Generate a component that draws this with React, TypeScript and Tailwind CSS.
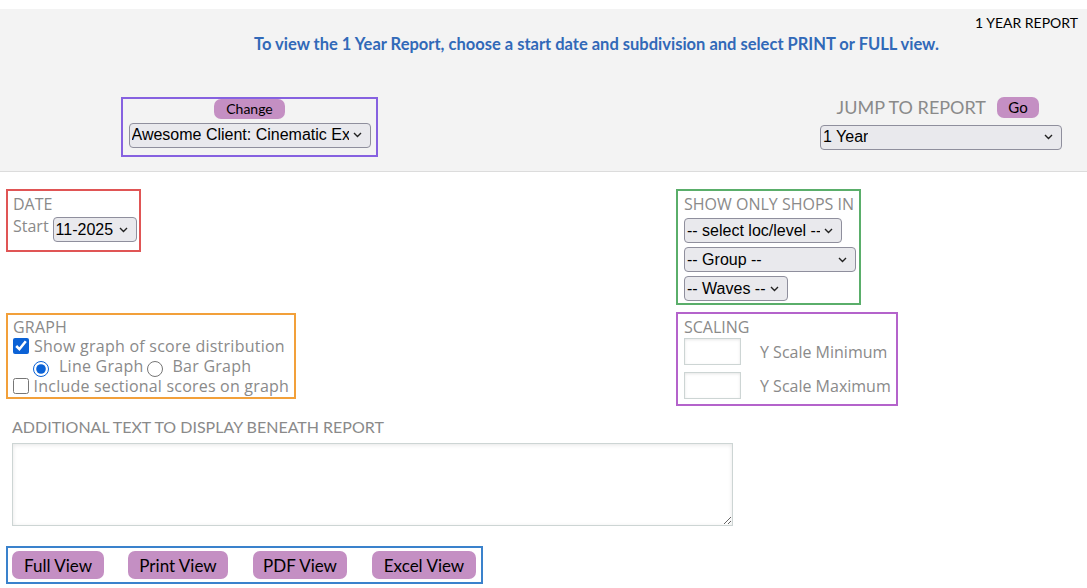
const Chevron = () => (
    <svg width="9" height="6" viewBox="0 0 9 6" className="ml-[4px] shrink-0">
        <path d="M1 1l3.5 3.5L8 1" fill="none" stroke="#222" strokeWidth="1.4"/>
    </svg>
)

const Select = ({label, className}: { label: string, className: string }) => (
    <div
        className={`flex h-[25px] shrink-0 items-center justify-between overflow-hidden rounded-[4px] border border-[#8f8f9d] bg-[#e9e9ed] pl-[2px] pr-[8px] font-['Liberation_Sans',Arial,sans-serif] text-[16px] leading-none text-black ${className}`}>
        <span className="overflow-hidden whitespace-nowrap">{label}</span>
        <Chevron/>
    </div>
)

const PurpleButton = ({children, className}: { children: string, className: string }) => (
    <button
        className={`rounded-[7px] bg-[#c48fc3] font-['Lato',sans-serif] text-black leading-none ${className}`}>
        {children}
    </button>
)

const label = "whitespace-nowrap font-['Open_Sans',sans-serif] text-[16px] leading-none text-[#8a8a8a]"

const App = () => {
    return (
        <div className="min-h-[588px] w-[1087px] bg-white">
            <div className="h-[9px]"/>
            <div className="flex h-[163px] flex-col border-b border-[#dcdcdc] bg-[#f3f3f3]">
                <div className="pr-[9px] pt-[7px] text-right font-['Lato',sans-serif] text-[14px] leading-none text-black">
                    1 YEAR REPORT
                </div>
                <div
                    className="pl-[106px] pt-[6px] text-center font-['Lato',sans-serif] text-[16.5px] font-bold leading-none text-[#3169b8]">
                    To view the 1 Year Report, choose a start date and subdivision and select PRINT or FULL view.
                </div>
                <div className="mt-[44px] flex items-start justify-between pl-[121px] pr-[25px]">
                    <div
                        className="flex h-[60px] w-[257px] flex-col items-center border-2 border-[#8661e0]">
                        <PurpleButton className="h-[20px] w-[71px] text-[14px]">Change</PurpleButton>
                        <Select label="Awesome Client: Cinematic Experiences" className="mt-[4px] w-[242px]"/>
                    </div>
                    <div className="flex w-[242px] flex-col items-end">
                        <div className="flex items-center gap-[11px] pr-[23px]">
                            <span
                                className="font-['Lato',sans-serif] text-[18px] leading-none text-[#8a8a8a]">JUMP TO REPORT</span>
                            <PurpleButton className="h-[21px] w-[42px] text-[15px]">Go</PurpleButton>
                        </div>
                        <Select label="1 Year" className="mt-[7px] w-[242px]"/>
                    </div>
                </div>
            </div>

            <div className="mt-[17px] grid grid-cols-[670px_1fr] gap-y-[8px] pl-[6px]">
                <div className="flex">
                    <div className="flex h-[63px] w-[135px] flex-col border-2 border-[#e05555] pl-[5px] pr-[2px] pt-[5px]">
                        <span className={label}>DATE</span>
                        <div className="mt-[5px] flex items-start gap-[4px]">
                            <span className={`${label} mt-[1px]`}>Start</span>
                            <Select label="11-2025" className="w-[84px]"/>
                        </div>
                    </div>
                </div>
                <div>
                    <div
                        className="flex h-[116px] w-[185px] flex-col gap-[4px] border-2 border-[#5aae6a] px-[6px] pt-[5px]">
                        <span className={`${label} mb-[2px]`}>SHOW ONLY SHOPS IN</span>
                        <Select label="-- select loc/level --" className="w-[158px]"/>
                        <Select label="-- Group --" className="w-[172px]"/>
                        <Select label="-- Waves --" className="w-[104px]"/>
                    </div>
                </div>

                <div>
                    <div
                        className="flex h-[86px] w-[290px] flex-col border-2 border-[#f2a03a] px-[5px] pt-[4px] tracking-[0.2px]">
                        <span className={label}>GRAPH</span>
                        <label className={`${label} mt-[3px] flex items-center gap-[5px] tracking-[0.25px]`}>
                            <input type="checkbox" defaultChecked className="m-0 h-[16px] w-[16px] accent-[#0b62d6]"/>
                            Show graph of score distribution
                        </label>
                        <div className={`${label} mt-[1px] flex items-center pl-[20px] tracking-[0.25px]`}>
                            <input type="radio" name="g" defaultChecked
                                   className="m-0 mt-[6px] h-[16px] w-[16px] accent-[#0b62d6]"/>
                            <span className="ml-[10px]">Line Graph</span>
                            <input type="radio" name="g" className="m-0 ml-[3px] mt-[6px] h-[16px] w-[16px]"/>
                            <span className="ml-[10px]">Bar Graph</span>
                        </div>
                        <label className={`${label} mt-[1px] flex items-center gap-[5px] tracking-[0.2px]`}>
                            <input type="checkbox" className="m-0 h-[16px] w-[16px]"/>
                            Include sectional scores on graph
                        </label>
                    </div>
                </div>
                <div className="-mt-[1px]">
                    <div className="flex h-[94px] w-[222px] flex-col border-2 border-[#b463cb] pl-[6px] pt-[5px]">
                        <span className={label}>SCALING</span>
                        <div className="mt-[3px] flex items-center gap-[19px]">
                            <input
                                className="h-[27px] w-[57px] shrink-0 border border-[#cdd5d4] bg-white shadow-[inset_0_1px_3px_rgba(0,0,0,0.1)]"/>
                            <span className={label}>Y Scale Minimum</span>
                        </div>
                        <div className="mt-[7px] flex items-center gap-[19px]">
                            <input
                                className="h-[27px] w-[57px] shrink-0 border border-[#cdd5d4] bg-white shadow-[inset_0_1px_3px_rgba(0,0,0,0.1)]"/>
                            <span className={label}>Y Scale Maximum</span>
                        </div>
                    </div>
                </div>
            </div>

            <div className="mt-[13px] pl-[12px]">
                <div className="font-['Lato',sans-serif] text-[16px] leading-none text-[#8a8a8a]">
                    ADDITIONAL TEXT TO DISPLAY BENEATH REPORT
                </div>
                <textarea
                    className="mt-[8px] block h-[83px] w-[721px] border border-[#cdd5d4] bg-white shadow-[inset_0_1px_4px_rgba(0,0,0,0.1)]"/>
            </div>

            <div
                className="ml-[6px] mt-[20px] flex h-[38px] w-[477px] items-center gap-[23px] border-2 border-[#3a82cc] px-[4px]">
                <PurpleButton className="h-[28px] w-[92px] text-[17px]">Full View</PurpleButton>
                <PurpleButton className="ml-[1px] h-[28px] w-[100px] text-[17px]">Print View</PurpleButton>
                <PurpleButton className="ml-[2px] h-[28px] w-[94px] text-[17px]">PDF View</PurpleButton>
                <PurpleButton className="ml-[2px] h-[28px] w-[104px] text-[17px]">Excel View</PurpleButton>
            </div>
        </div>
    )
}

export default App
